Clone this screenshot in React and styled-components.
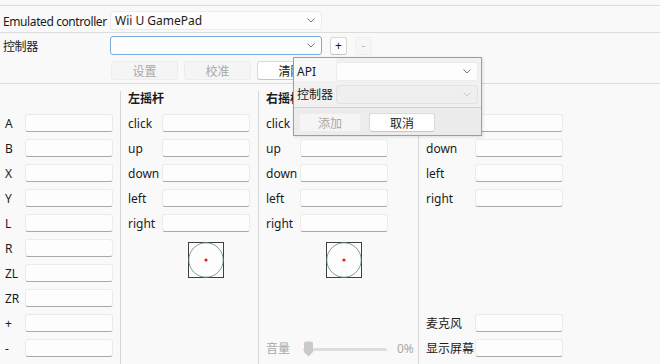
import React from 'react';
import styled, { createGlobalStyle, css } from 'styled-components';

const GlobalStyle = createGlobalStyle`
  html, body {
    margin: 0;
    padding: 0;
    background: #f9f9f9;
    overflow: hidden;
  }
  body {
    font-family: 'Noto Sans', 'Noto Sans CJK SC', sans-serif;
    font-size: 12px;
    color: #1b1b1b;
  }
`;

const Page = styled.div`
  position: relative;
  width: 660px;
  height: 364px;
  padding-top: 5px;
  box-sizing: border-box;
  overflow: hidden;
`;

const Section = styled.div`
  border-top: 1px solid #dcdcdc;
  padding: ${(p) => p.pad || '0'};
  padding-left: 3px;
`;

const FormRow = styled.div`
  display: flex;
  align-items: center;
  height: 19px;
`;

const FormLabel = styled.div`
  width: 107px;
  flex-shrink: 0;
  line-height: 19px;
  white-space: nowrap;
  letter-spacing: -0.4px;
  padding-top: 1px;
`;

const ComboBox = styled.div`
  position: relative;
  box-sizing: border-box;
  width: ${(p) => p.width || 212}px;
  height: ${(p) => p.height || 19}px;
  background: ${(p) => (p.disabled ? '#efefef' : '#fdfdfd')};
  border: 1px solid ${(p) => (p.focused ? '#7aaee0' : p.disabled ? '#e2e2e2' : '#ececec')};
  border-radius: 3px;
  display: flex;
  align-items: center;
  justify-content: ${(p) => (p.value ? 'space-between' : 'flex-end')};
  padding: 0 6px 0 4px;
  white-space: nowrap;
`;

const Chevron = ({ light }) => (
  <svg width="8" height="5" viewBox="0 0 8 5">
    <polyline
      points="0.5,0.5 4,4 7.5,0.5"
      fill="none"
      stroke={light ? '#c4c4c4' : '#6a6a6a'}
      strokeWidth="0.9"
    />
  </svg>
);

const SmallButton = styled.div`
  box-sizing: border-box;
  width: 17px;
  height: 18px;
  margin-left: ${(p) => p.gap}px;
  border-radius: 3px;
  display: flex;
  align-items: center;
  justify-content: center;
  font-size: 12px;
  ${(p) =>
    p.disabled
      ? css`
          color: #b8b8b8;
          background: #f6f6f6;
          border: 1px solid #f0f0f0;
        `
      : css`
          color: #1b1b1b;
          background: #fefefe;
          border: 1px solid #d8d8d8;
          border-bottom-color: #c4c4c4;
        `}
`;

const ButtonRow = styled.div`
  display: flex;
  gap: 6px;
  margin: 6px 0 3px 108px;
`;

const PushButton = styled.div`
  box-sizing: border-box;
  width: ${(p) => p.width || 67}px;
  height: 19px;
  border-radius: 3px;
  display: flex;
  align-items: center;
  justify-content: center;
  font-size: 12px;
  ${(p) =>
    p.disabled
      ? css`
          color: #a9a9a9;
          background: #f5f5f5;
          border: 1px solid #ededed;
        `
      : css`
          color: #1b1b1b;
          background: #fefefe;
          border: 1px solid #dadada;
          border-bottom-color: #c6c6c6;
        `}
`;

const Columns = styled.div`
  display: grid;
  grid-template-columns: 120px 138px 160px 1fr;
  border-top: 1px solid #dcdcdc;
  height: 280px;
`;

const Column = styled.div`
  margin-top: 7px;
  border-left: ${(p) => (p.first ? 'none' : '1px solid #d6d6d6')};
  padding-left: ${(p) => (p.first ? 5 : 6)}px;
  display: grid;
  grid-template-rows: 22px repeat(10, 25px);
  align-content: start;
`;

const Header = styled.div`
  font-weight: 700;
  line-height: 16px;
  padding-left: 1px;
`;

const Row = styled.div`
  display: flex;
  align-items: flex-start;
  grid-row: ${(p) => p.at || 'auto'};
`;

const Label = styled.div`
  width: ${(p) => p.width}px;
  flex-shrink: 0;
  line-height: 18px;
  padding-top: 2px;
  padding-left: ${(p) => (p.first ? 0 : 1)}px;
  box-sizing: border-box;
  white-space: nowrap;
  color: ${(p) => (p.muted ? '#a8a8a8' : 'inherit')};
`;

const KeyInput = styled.div`
  box-sizing: border-box;
  width: 88px;
  height: 18px;
  margin-top: 1px;
  background: #fdfdfd;
  border: 1px solid #ebebeb;
  border-bottom: 1px solid #a9a9a9;
  border-radius: 3px;
`;

const StickBox = styled.div`
  grid-row: 7 / span 3;
  display: flex;
  padding-top: 4px;
  padding-left: ${(p) => p.offset}px;
`;

const Stick = () => (
  <svg width="36" height="36" viewBox="0 0 36 36">
    <rect x="0.5" y="0.5" width="35" height="35" fill="#fdfdfd" stroke="#3e3e3e" />
    <circle cx="18" cy="18" r="17.2" fill="#fdfdfd" stroke="#5a8478" strokeWidth="0.8" />
    <circle cx="18" cy="18" r="1.6" fill="#e21e1e" />
  </svg>
);

const SliderWrap = styled.div`
  display: flex;
  align-items: center;
  width: 96px;
  height: 18px;
  margin-top: 2px;
  padding-left: 3px;
  box-sizing: border-box;
`;

const Track = styled.div`
  position: relative;
  width: 84px;
  height: 3px;
  background: #dedede;
  border-radius: 2px;
`;

const Thumb = styled.svg`
  position: absolute;
  left: 0;
  top: -7px;
`;

const Popup = styled.div`
  position: absolute;
  left: 293px;
  top: 57px;
  width: 189px;
  box-sizing: border-box;
  background: #f1f1f1;
  border: 1px solid #9e9e9e;
  box-shadow: 1px 1px 3px rgba(0, 0, 0, 0.12);
`;

const PopupBody = styled.div`
  display: flex;
  flex-direction: column;
  gap: 5px;
  padding: 4px 3px 4px 0;
`;

const PopupRow = styled.div`
  display: flex;
  align-items: center;
  height: 18px;
`;

const PopupLabel = styled.div`
  width: 42px;
  flex-shrink: 0;
  height: ${(p) => (p.lit ? 23 : 18)}px;
  margin-top: ${(p) => (p.lit ? -4 : 0)}px;
  padding: ${(p) => (p.lit ? '5px 0 0 3px' : '1px 0 0 3px')};
  box-sizing: border-box;
  line-height: 18px;
  white-space: nowrap;
  background: ${(p) => (p.lit ? '#f8f8f8' : 'transparent')};
`;

const PopupFooter = styled.div`
  display: flex;
  gap: 8px;
  border-top: 1px solid #d2d2d2;
  background: #ececec;
  padding: 5px 5px 3px;
`;

const buttons = ['A', 'B', 'X', 'Y', 'L', 'R', 'ZL', 'ZR', '+', '-'];
const dirs = ['click', 'up', 'down', 'left', 'right'];

const StickColumn = ({ title, volume }) => (
  <Column>
    <Header>{title}</Header>
    {dirs.map((d) => (
      <Row key={d}>
        <Label width={35}>{d}</Label>
        <KeyInput />
      </Row>
    ))}
    <StickBox offset={61}>
      <Stick />
    </StickBox>
    {volume && (
      <Row at={11}>
        <Label width={35} muted>
          音量
        </Label>
        <SliderWrap>
          <Track>
            <Thumb width="11" height="16" viewBox="0 0 11 16">
              <path d="M1 2.5 Q1 0.5 3 0.5 H8 Q10 0.5 10 2.5 V11 L5.5 15.5 L1 11 Z" fill="#cacaca" />
            </Thumb>
          </Track>
        </SliderWrap>
        <Label width={20} muted>
          0%
        </Label>
      </Row>
    )}
  </Column>
);

export default function App() {
  return (
    <Page>
      <GlobalStyle />
      <Section pad="5px 0 2px">
        <FormRow>
          <FormLabel>Emulated controller</FormLabel>
          <ComboBox value="Wii U GamePad">
            <span>Wii U GamePad</span>
            <Chevron />
          </ComboBox>
        </FormRow>
      </Section>
      <Section pad="3px 0 0">
        <FormRow>
          <FormLabel>控制器</FormLabel>
          <ComboBox focused>
            <Chevron />
          </ComboBox>
          <SmallButton gap={8}>+</SmallButton>
          <SmallButton gap={8} disabled>
            -
          </SmallButton>
        </FormRow>
        <ButtonRow>
          <PushButton disabled>设置</PushButton>
          <PushButton disabled>校准</PushButton>
          <PushButton>清除</PushButton>
        </ButtonRow>
      </Section>
      <Columns>
        <Column first>
          <div />
          {buttons.map((b) => (
            <Row key={b}>
              <Label width={20} first>
                {b}
              </Label>
              <KeyInput />
            </Row>
          ))}
        </Column>
        <StickColumn title="左摇杆" />
        <StickColumn title="右摇杆" volume />
        <Column>
          <Header>十字键</Header>
          {['up', 'down', 'left', 'right'].map((d) => (
            <Row key={d}>
              <Label width={50}>{d}</Label>
              <KeyInput />
            </Row>
          ))}
          <Row at={10}>
            <Label width={50}>麦克风</Label>
            <KeyInput />
          </Row>
          <Row at={11}>
            <Label width={50}>显示屏幕</Label>
            <KeyInput />
          </Row>
        </Column>
      </Columns>
      <Popup>
        <PopupBody>
          <PopupRow>
            <PopupLabel lit>API</PopupLabel>
            <ComboBox width={143} height={19}>
              <Chevron />
            </ComboBox>
          </PopupRow>
          <PopupRow>
            <PopupLabel>控制器</PopupLabel>
            <ComboBox width={143} height={19} disabled>
              <Chevron light />
            </ComboBox>
          </PopupRow>
        </PopupBody>
        <PopupFooter>
          <PushButton disabled width={62}>
            添加
          </PushButton>
          <PushButton width={66}>取消</PushButton>
        </PopupFooter>
      </Popup>
    </Page>
  );
}
